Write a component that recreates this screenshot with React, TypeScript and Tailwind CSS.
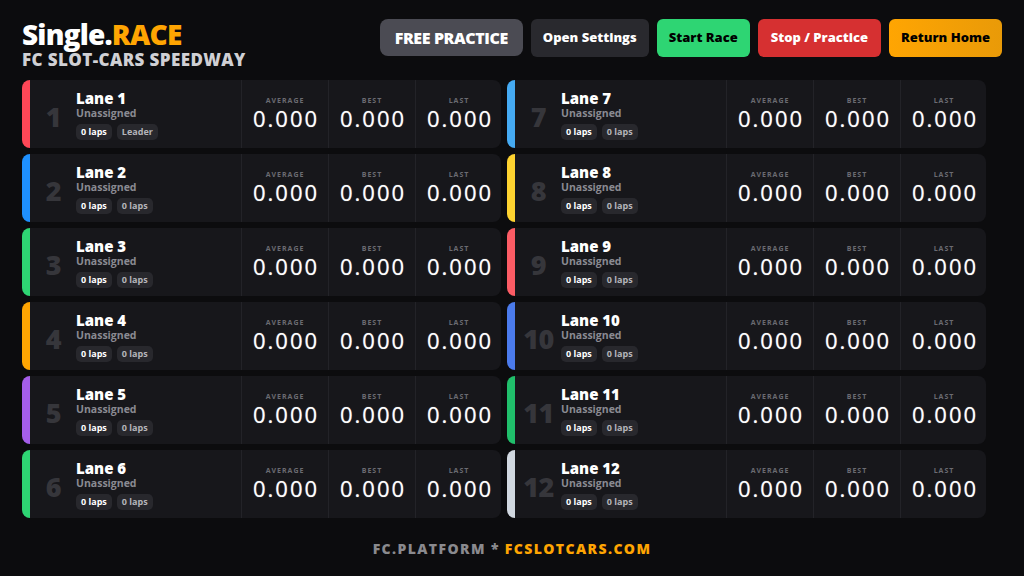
import * as React from "react";

type Lane = { id: number; color: string; tags: string[] };

const lanes: Lane[] = [
  { id: 1, color: "bg-[#ff4757]", tags: ["0 laps", "Leader"] },
  { id: 2, color: "bg-[#1e90ff]", tags: ["0 laps", "0 laps"] },
  { id: 3, color: "bg-[#2ed573]", tags: ["0 laps", "0 laps"] },
  { id: 4, color: "bg-[#ffa502]", tags: ["0 laps", "0 laps"] },
  { id: 5, color: "bg-[#a55eea]", tags: ["0 laps", "0 laps"] },
  { id: 6, color: "bg-[#2ed573]", tags: ["0 laps", "0 laps"] },
  { id: 7, color: "bg-[#45aaf2]", tags: ["0 laps", "0 laps"] },
  { id: 8, color: "bg-[#fed330]", tags: ["0 laps", "0 laps"] },
  { id: 9, color: "bg-[#fc5c65]", tags: ["0 laps", "0 laps"] },
  { id: 10, color: "bg-[#4b7bec]", tags: ["0 laps", "0 laps"] },
  { id: 11, color: "bg-[#20bf6b]", tags: ["0 laps", "0 laps"] },
  { id: 12, color: "bg-[#d1d8e0]", tags: ["0 laps", "0 laps"] },
];

function Stat({ label }: { label: string }) {
  return (
    <div className="w-[87px] flex-none border-l border-[#232328] flex flex-col items-center justify-center pb-[2px]">
      <span className="text-[7px] font-bold tracking-[1px] text-[#6b6b72] leading-none uppercase">{label}</span>
      <span className="text-[22px] leading-none tracking-[2px] text-white mt-[3px] pl-[2px] [text-shadow:0_0_1px_rgba(255,255,255,0.6)]">
        0.000
      </span>
    </div>
  );
}

function LaneCard({ lane }: { lane: Lane }) {
  return (
    <div className="h-[68px] flex rounded-[8px] bg-[#17171b] overflow-hidden">
      <div className={`w-[8px] flex-none ${lane.color}`} />
      <div className="w-[211px] flex-none flex items-center">
        <div className="w-[46px] flex-none text-center text-[27px] font-extrabold text-[#36363b] leading-none pt-[4px] pl-[1px] tracking-[-0.5px]">
          {lane.id}
        </div>
        <div className="flex flex-col pt-[1px]">
          <span className="text-[15px] font-extrabold text-white leading-[17px]">Lane {lane.id}</span>
          <span className="text-[10.5px] font-bold text-[#8a8a92] leading-[13px]">Unassigned</span>
          <div className="flex gap-[5px] mt-[4px]">
            {lane.tags.map((t, i) => (
              <span
                key={i}
                className={`h-[16px] px-[5px] rounded-[5px] bg-[#28282d] text-[9px] font-bold leading-[16px] ${i === 0 ? "text-white" : "text-[#b4b4ba]"}`}
              >
                {t}
              </span>
            ))}
          </div>
        </div>
      </div>
      <Stat label="Average" />
      <Stat label="Best" />
      <Stat label="Last" />
    </div>
  );
}

export default function App() {
  return (
    <div className="w-[1024px] h-[576px] bg-[#0c0c0e] font-['Open_Sans',sans-serif] flex flex-col px-[22px] overflow-hidden">
      {/* Header */}
      <div className="flex justify-between items-start pt-[19px] h-[80px]">
        <div className="flex flex-col">
          <h1 className="text-[28px] font-extrabold leading-[31px] tracking-[-0.8px] text-white">
            Single.<span className="text-[#ffa502]">RACE</span>
          </h1>
          <p className="text-[17px] font-extrabold leading-[20px] tracking-[0.4px] text-[#d0d0d4]">FC SLOT-CARS SPEEDWAY</p>
        </div>
        <div className="flex gap-[8px]">
          <button className="h-[37px] px-[15px] rounded-[8px] bg-[#4b4b53] text-white text-[16px] font-extrabold tracking-[-0.4px]">
            FREE PRACTICE
          </button>
          <button className="h-[38px] px-[12px] rounded-[6px] bg-[#29292e] text-white text-[13px] font-extrabold">
            Open Settings
          </button>
          <button className="h-[38px] px-[12px] rounded-[6px] bg-[#2ed573] text-black text-[13px] font-extrabold">
            Start Race
          </button>
          <button className="h-[38px] px-[13px] rounded-[6px] bg-[#d63031] text-white text-[13px] font-extrabold">
            Stop / Practice
          </button>
          <button className="h-[38px] px-[12px] rounded-[6px] bg-gradient-to-r from-[#ffa502] to-[#e99a08] text-black text-[13px] font-extrabold">
            Return Home
          </button>
        </div>
      </div>

      {/* Lanes */}
      <div className="w-[964px] grid grid-cols-2 grid-flow-col grid-rows-6 gap-[6px]">
        {lanes.map((l) => (
          <LaneCard key={l.id} lane={l} />
        ))}
      </div>

      {/* Footer */}
      <div className="flex-1 flex items-center justify-center pt-[2px]">
        <p className="text-[14px] font-extrabold tracking-[1.4px] text-[#8a8a8e]">
          FC.PLATFORM * <span className="text-[#ffa502]">FCSLOTCARS.COM</span>
        </p>
      </div>
    </div>
  );
}
